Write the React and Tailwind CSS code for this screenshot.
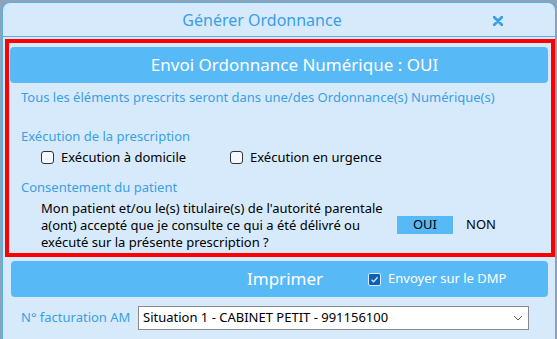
import React from 'react';

const font = { fontFamily: '"Noto Sans", "Open Sans", sans-serif' };

function Box({ checked }) {
  if (checked) {
    return (
      <span className="flex h-[13px] w-[13px] items-center justify-center rounded-[2px] border border-[#d8ecff] bg-[#0f5fb5]">
        <svg width="9" height="9" viewBox="0 0 9 9">
          <path d="M1.5 4.8 L3.6 6.8 L7.6 2.2" fill="none" stroke="#cfe6ff" strokeWidth="1.3" />
        </svg>
      </span>
    );
  }
  return <span className="block h-[13px] w-[13px] rounded-[3px] border border-[#333] bg-[#f4f8fc]" />;
}

export default function App() {
  return (
    <div style={font} className="h-[339px] w-[557px] overflow-hidden bg-[#8fa3b8] pl-[2px] pr-[1px] pt-[2px]">
      <div className="flex h-[337px] flex-col rounded-t-[8px] border border-b-0 border-[#58aeea] bg-[#d6eafc]">
        {/* title bar */}
        <div className="relative flex h-[34px] shrink-0 items-center justify-center border-b border-[#58aeea] pr-[34px]">
          <span className="text-[16px] text-[#3a9fe6]">Générer Ordonnance</span>
          <svg className="absolute right-[52px] top-[13px]" width="10" height="10" viewBox="0 0 10 10">
            <path d="M1 1 L9 9 M9 1 L1 9" stroke="#3a9fe6" strokeWidth="2.8" strokeLinecap="round" />
          </svg>
        </div>

        {/* red framed section */}
        <div className="ml-[2px] mt-[2px] border-4 border-[#ff0000] pb-[2px] pl-[1px] pr-[3px] pt-[4px]">
          <div className="flex h-[36px] items-center justify-center rounded-[4px] bg-[#58b9f7] pl-[31px] text-[17px] text-white">
            Envoi Ordonnance Numérique : OUI
          </div>
          <div className="pl-[11px] text-[13px] leading-[17px]">
            <div className="mt-[6px] text-[#3a9fe6]">
              Tous les éléments prescrits seront dans une/des Ordonnance(s) Numérique(s)
            </div>
            <div className="mt-[22px] text-[#3a9fe6]">Exécution de la prescription</div>
            <div className="mt-[4px] flex items-center pl-[20px] text-black">
              <Box />
              <span className="ml-[7px] w-[169px]">Exécution à domicile</span>
              <Box />
              <span className="ml-[7px]">Exécution en urgence</span>
            </div>
            <div className="mt-[13px] text-[#3a9fe6]">Consentement du patient</div>
            <div className="mt-[4px] flex items-center pl-[20px]">
              <div className="w-[356px] text-black">
                Mon patient et/ou le(s) titulaire(s) de l'autorité parentale a(ont) accepté que je consulte ce qui a été
                délivré ou exécuté sur la présente prescription ?
              </div>
              <div className="mt-[-2px] flex">
                <span className="flex h-[18px] w-[56px] items-center justify-center bg-[#58b9f7] text-black">OUI</span>
                <span className="flex h-[18px] w-[56px] items-center justify-center text-black">NON</span>
              </div>
            </div>
          </div>
        </div>

        {/* print bar */}
        <div className="ml-[8px] mr-[7px] mt-[4px] flex h-[36px] items-center rounded-[4px] bg-[#58b9f7] pl-[236px] text-white">
          <span className="text-[17px]">Imprimer</span>
          <span className="ml-[45px] flex items-center text-[13px]">
            <Box checked />
            <span className="ml-[7px]">Envoyer sur le DMP</span>
          </span>
        </div>

        {/* billing */}
        <div className="mt-[9px] flex items-center pl-[18px] text-[13px]">
          <span className="w-[117px] text-[#3a9fe6]">N° facturation AM</span>
          <div className="flex h-[24px] w-[391px] items-center justify-between border border-[#8a8a8a] bg-white pl-[4px] pr-[5px] text-black">
            <span>Situation 1 - CABINET PETIT - 991156100</span>
            <svg width="10" height="6" viewBox="0 0 10 6">
              <path d="M1 1 L5 5 L9 1" fill="none" stroke="#666" strokeWidth="1" />
            </svg>
          </div>
        </div>
      </div>
    </div>
  );
}
